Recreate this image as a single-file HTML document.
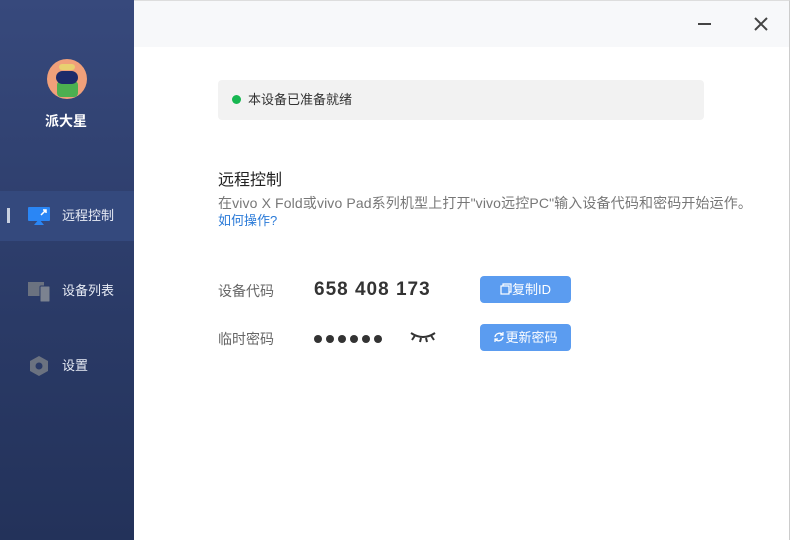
<!DOCTYPE html>
<html><head><meta charset="utf-8"><style>
*{margin:0;padding:0;box-sizing:border-box}
body{width:790px;height:540px;overflow:hidden;background:#fff;font-family:"Liberation Sans","Noto Sans CJK SC",sans-serif;position:relative;line-height:1.2}
.side{position:absolute;left:0;top:0;width:134px;height:540px;background:linear-gradient(#37497c,#2a3a66 60%,#23325a)}
.title{position:absolute;left:134px;top:0;right:0;height:47px;background:#f7f8fa;border-top:1px solid #ddd;border-right:1px solid #ccc}
.main{position:absolute;left:134px;top:47px;right:0;bottom:0;border-right:1px solid #ccc}
.abs{position:absolute}
.nav{position:absolute;left:0;width:134px;height:50px;color:#e8ecf5;font-size:13px}
.nav span{position:absolute;left:62px;top:17px}
.btn{position:absolute;width:91px;height:27px;background:#5b9cf0;border-radius:4px;color:#fff;font-size:13px;line-height:27px;text-align:center}
</style></head><body>
<div class="side">
 <div class="abs" style="left:47px;top:59px;width:40px;height:40px;border-radius:50%;background:#f0a07a;overflow:hidden">
  <div class="abs" style="left:10px;top:22px;width:21px;height:16px;background:#4caf50;border-radius:4px"></div>
  <div class="abs" style="left:9px;top:12px;width:22px;height:13px;background:#1d2a6a;border-radius:7px"></div>
  <div class="abs" style="left:12px;top:5px;width:16px;height:6px;background:#e8d070;border-radius:3px"></div>
 </div>
 <div class="abs" style="left:45px;top:113px;color:#fff;font-size:14px;font-weight:bold">派大星</div>
 <div class="nav" style="top:191px;background:#34497d"><div class="abs" style="left:7px;top:17px;width:3px;height:15px;background:#c8d0e0"></div>
  <svg class="abs" style="left:28px;top:16px" width="22" height="18"><rect x="0" y="0" width="22" height="14" rx="1" fill="#2a86f5"/><path d="M6 18 L11 12 L16 18Z" fill="#2a86f5"/><path d="M13 8 L18 3 M15 3h3v3" stroke="#fff" stroke-width="1.5" fill="none"/></svg>
  <span>远程控制</span></div>
 <div class="nav" style="top:266px">
  <svg class="abs" style="left:28px;top:16px" width="22" height="20"><rect x="0" y="0" width="16" height="14" fill="#6b7280"/><rect x="12" y="4" width="10" height="16" rx="1" fill="#7b8290" stroke="#2a3a66" stroke-width="1"/></svg>
  <span>设备列表</span></div>
 <div class="nav" style="top:341px">
  <svg class="abs" style="left:28px;top:14px" width="22" height="22"><path d="M11 1 L20 6 V16 L11 21 L2 16 V6Z" fill="#6b7280"/><circle cx="11" cy="11" r="3.5" fill="#2a3a66"/></svg>
  <span>设置</span></div>
</div>
<div class="title">
 <div class="abs" style="left:564px;top:22px;width:13px;height:2px;background:#444"></div>
 <svg class="abs" style="left:619px;top:15px" width="16" height="16"><path d="M2 2L14 14M14 2L2 14" stroke="#444" stroke-width="2"/></svg>
</div>
<div class="main">
 <div class="abs" style="left:84px;top:33px;width:486px;height:40px;background:#f2f2f2;border-radius:4px">
  <div class="abs" style="left:14px;top:15px;width:9px;height:9px;border-radius:50%;background:#17b751"></div>
  <div class="abs" style="left:30px;top:12px;font-size:13px;color:#333">本设备已准备就绪</div>
 </div>
 <div class="abs" style="left:84px;top:124px;font-size:16px;color:#222">远程控制</div>
 <div class="abs" style="left:84px;top:148px;font-size:14px;color:#777;white-space:nowrap;letter-spacing:0.13px">在vivo X Fold或vivo Pad系列机型上打开"vivo远控PC"输入设备代码和密码开始运作。</div>
 <div class="abs" style="left:84px;top:166px;font-size:13px;color:#2a7ad8">如何操作?</div>
 <div class="abs" style="left:84px;top:236px;font-size:14px;color:#666">设备代码</div>
 <div class="abs" style="left:180px;top:232px;font-size:19px;font-weight:bold;color:#333;letter-spacing:1px">658 408 173</div>
 <div class="btn" style="left:346px;top:229px"><svg width="12" height="12" style="vertical-align:-1px"><rect x="1" y="3" width="8" height="8" fill="none" stroke="#fff" stroke-width="1.2"/><path d="M3 3V1h8v8H9" fill="none" stroke="#fff" stroke-width="1.2"/></svg>复制ID</div>
 <div class="abs" style="left:84px;top:284px;font-size:14px;color:#666">临时密码</div>
 <svg class="abs" style="left:180px;top:287px" width="70" height="10"><g fill="#333"><circle cx="4" cy="5" r="4"/><circle cx="16" cy="5" r="4"/><circle cx="28" cy="5" r="4"/><circle cx="40" cy="5" r="4"/><circle cx="52" cy="5" r="4"/><circle cx="64" cy="5" r="4"/></g></svg>
 <svg class="abs" style="left:276px;top:284px" width="26" height="12"><path d="M1 2 Q13 10 25 2 M5 4.5L2 9 M11 7L10 11 M16 7L17 11 M21 4.5L24 9" stroke="#333" stroke-width="2" fill="none"/></svg>
 <div class="btn" style="left:346px;top:277px"><svg width="12" height="12" style="vertical-align:-1px"><path d="M10 4A4.5 4.5 0 0 0 2 6M2 8A4.5 4.5 0 0 0 10 6" fill="none" stroke="#fff" stroke-width="1.3"/><path d="M10 1V4H7M2 11V8H5" fill="none" stroke="#fff" stroke-width="1.2"/></svg>更新密码</div>
</div>
</body></html>
